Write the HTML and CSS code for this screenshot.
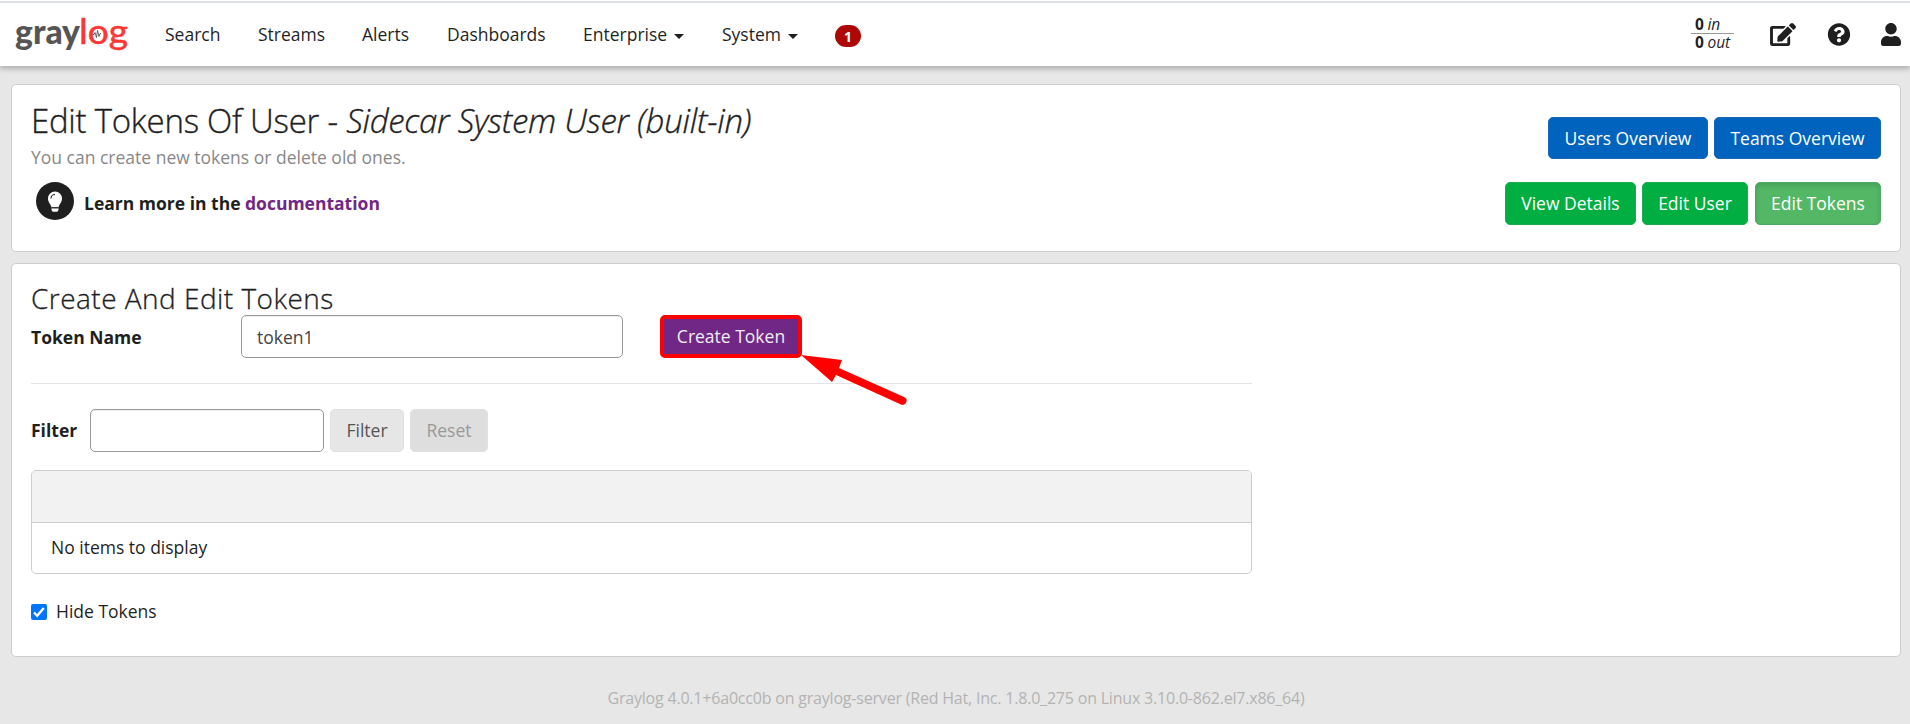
FILE: index.html
```html
<!DOCTYPE html>
<html lang="en">
<head>
<meta charset="utf-8">
<title>Graylog - Edit Tokens</title>
<link rel="stylesheet" href="styles.css">
</head>
<body>
<header class="navbar">
  <svg class="logo" width="116" height="50" viewBox="0 0 116 50">
    <text class="logo-text logo-gray" x="3" y="33.500" textLength="65" lengthAdjust="spacingAndGlyphs">gray</text>
    <text class="logo-text logo-log" x="67" y="33.500" textLength="49" lengthAdjust="spacingAndGlyphs">log</text>
    <path class="logo-wave" d="M80.500 24.500h1.500l1-2 1.500 5 1-7 1.500 6 1-3h1"/>
  </svg>
  <nav class="nav">
    <a class="nav-item search">Search</a>
    <a class="nav-item streams">Streams</a>
    <a class="nav-item alerts">Alerts</a>
    <a class="nav-item dashboards">Dashboards</a>
    <a class="nav-item enterprise">Enterprise<span class="caret"></span></a>
    <a class="nav-item system">System<span class="caret"></span></a>
    <span class="badge">1</span>
  </nav>
  <div class="throughput">
    <div class="rate rate-in"><b>0</b> <i>in</i></div>
    <div class="rate"><b>0</b> <i>out</i></div>
  </div>
  <svg class="icon-edit" width="26" height="23" viewBox="0 0 576 512"><path d="M402.6 83.2l90.200 90.200c3.800 3.800 3.800 10 0 13.800L274.400 405.600l-92.800 10.300c-12.400 1.400-22.900-9.100-21.500-21.500l10.300-92.800L388.800 83.200c3.800-3.800 10-3.800 13.800 0zm162-22.900l-48.800-48.800c-15.200-15.200-39.900-15.200-55.200 0l-35.400 35.400c-3.800 3.800-3.800 10 0 13.800l90.200 90.200c3.800 3.800 10 3.800 13.800 0l35.400-35.400c15.200-15.300 15.200-40 0-55.200zM384 346.200V448H64V128h229.800c3.200 0 6.200-1.300 8.500-3.500l40-40c7.600-7.600 2.200-20.500-8.500-20.500H48C21.500 64 0 85.500 0 112v352c0 26.500 21.500 48 48 48h352c26.500 0 48-21.500 48-48V306.200c0-10.700-12.900-16-20.500-8.500l-40 40c-2.200 2.300-3.500 5.300-3.500 8.500z"/></svg>
  <svg class="icon-help" width="24" height="23" viewBox="0 0 512 512"><path d="M504 256c0 136.997-111.043 248-248 248S8 392.997 8 256C8 119.083 119.043 8 256 8s248 111.083 248 248zM262.655 90c-54.497 0-89.255 22.957-116.549 63.758-3.536 5.286-2.353 12.415 2.715 16.258l34.699 26.310c5.205 3.947 12.621 3.008 16.665-2.122 17.864-22.658 30.113-35.797 57.303-35.797 20.429 0 45.698 13.148 45.698 32.958 0 14.976-12.363 22.667-32.534 33.976C247.128 238.528 216 254.941 216 296v4c0 6.627 5.373 12 12 12h56c6.627 0 12-5.373 12-12v-1.333c0-28.462 83.186-29.647 83.186-106.667 0-58.002-60.165-102-116.531-102zM256 338c-25.365 0-46 20.635-46 46 0 25.364 20.635 46 46 46s46-20.636 46-46c0-25.365-20.635-46-46-46z"/></svg>
  <svg class="icon-user" width="20" height="23" viewBox="0 0 448 512"><path d="M224 256c70.700 0 128-57.300 128-128S294.700 0 224 0 96 57.300 96 128s57.300 128 128 128zm89.600 32h-16.700c-22.200 10.200-46.900 16-72.900 16s-50.600-5.800-72.900-16h-16.700C60.200 288 0 348.200 0 422.400V464c0 26.500 21.500 48 48 48h352c26.500 0 48-21.500 48-48v-41.600c0-74.200-60.200-134.400-134.400-134.400z"/></svg>
</header>

<main class="page">
  <section class="card header-card">
    <div class="intro">
      <h1 class="title">Edit Tokens Of User - <em>Sidecar System User (built-in)</em></h1>
      <p class="lead">You can create new tokens or delete old ones.</p>
      <div class="learn">
        <svg width="38" height="38" viewBox="0 0 38 38"><circle cx="19" cy="19" r="19" fill="#1f1f1f"/><path d="M19 9.500a7 7 0 0 0-7 7c0 4 2.800 5.400 3.500 9h7c.7-3.600 3.500-5 3.500-9a7 7 0 0 0-7-7zM15.500 26.300h7v1.700l-1.200 1.700h-4.600L15.500 28z" fill="#fff"/><path d="M15 16.500a4 4 0 0 1 4-4M15.500 25.800h7" fill="none" stroke="#1f1f1f" stroke-width="1.100"/></svg>
        <strong>Learn more in the <a class="doc">documentation</a></strong>
      </div>
    </div>
    <div class="actions">
      <div class="button-row">
        <button class="btn blue users">Users Overview</button>
        <button class="btn blue teams">Teams Overview</button>
      </div>
      <div class="button-row">
        <button class="btn green view">View Details</button>
        <button class="btn green edit-user">Edit User</button>
        <button class="btn green active edit-tokens">Edit Tokens</button>
      </div>
    </div>
  </section>

  <section class="card token-card">
    <h2 class="subtitle">Create And Edit Tokens</h2>
    <div class="token-form">
      <label class="label name-label" for="token-name">Token Name</label>
      <input class="input name-input" id="token-name" value="token1">
      <div class="create-wrap">
        <button class="btn create">Create Token</button>
        <svg class="arrow" width="110" height="56" viewBox="0 0 110 56"><path d="M0 0 41 5 38 13 103 42A4 4 0 0 1 100 49.500L35 20 31 27Z" fill="#f00"/></svg>
      </div>
    </div>
    <hr class="rule">
    <div class="filter-form">
      <label class="label filter-label" for="filter">Filter</label>
      <input class="input filter-input" id="filter">
      <button class="btn gray filter-btn">Filter</button>
      <button class="btn gray reset-btn">Reset</button>
    </div>
    <div class="list">
      <div class="list-head"></div>
      <div class="list-row">No items to display</div>
    </div>
    <label class="hide">
      <svg width="16" height="16" viewBox="0 0 16 16"><rect width="16" height="16" rx="2" fill="#0075ff"/><path d="M3 8.500 6.200 11.700 12.800 4" fill="none" stroke="#fff" stroke-width="2.300"/></svg>
      <span>Hide Tokens</span>
    </label>
  </section>
  <footer class="footer"><span>Graylog 4.0.1+6a0cc0b on graylog-server (Red Hat, Inc. 1.8.0_275 on Linux 3.10.0-862.el7.x86_64)</span></footer>
</main>
</body>
</html>
```

FILE: styles.css
```css
* { box-sizing: border-box; }
body {
  margin: 0;
  height: 724px;
  overflow: hidden;
  background: #e7e7e7;
  color: #1f1f1f;
  font: 400 17.5px/25px "Open Sans", sans-serif;
}
.navbar {
  position: relative;
  display: flex;
  height: 66px;
  padding-left: 12px;
  background: #fff;
  border-top: 1px solid #fff;
  box-shadow: inset 0 2px #dcdfe5, 0 3px 5px rgba(0, 0, 0, .24);
}
.logo { margin-top: 9px; flex: none; overflow: visible; }
.logo-text { font-family: Lato, sans-serif; font-size: 35px; }
.logo-gray { fill: #555; font-weight: 900; }
.logo-log { fill: #ff3633; font-weight: 400; stroke: #ff3633; stroke-width: .5; }
.logo-wave { fill: none; stroke: #444; stroke-width: .8; }
.nav { display: flex; padding-top: 21px; margin-left: 37px; }
.nav-item { flex: none; white-space: nowrap; }
.search { width: 93px; }
.streams { width: 104px; }
.alerts { width: 85px; }
.dashboards { width: 136px; }
.enterprise { width: 139px; }
.system { width: 113px; }
.caret {
  display: inline-block;
  margin-left: 7px;
  vertical-align: 2px;
  border: 5px solid transparent;
  border-top-color: #1f1f1f;
  border-bottom: 0;
}
.badge {
  width: 26px;
  height: 22px;
  margin-top: 3px;
  border-radius: 11px;
  background: #ad0707;
  color: #fff;
  font-size: 14px;
  font-weight: 700;
  line-height: 23px;
  text-align: center;
}
.throughput { margin: 14px 36px 0 auto; width: 43px; font-size: 15.5px; line-height: 18px; }
.rate { height: 18px; padding-left: 4px; white-space: nowrap; word-spacing: -.5px; line-height: 17px; }
.rate-in { height: 19px; line-height: 19px; border-bottom: 1px solid #999; }
.navbar > svg:not(.logo) { margin-top: 22px; flex: none; fill: #1f1f1f; }
.icon-help { margin: 0 30px 0 31px; }
.icon-user { margin-right: 9px; }
.page { padding: 18px 9px 0 11px; }
.card { background: #fff; border: 1px solid #cdcdcd; border-radius: 5px; padding: 0 19px; }
.header-card { display: flex; justify-content: space-between; height: 168px; }
.intro { padding-top: 13px; }
.title { margin: 0 0 1px; font-size: 33px; font-weight: 300; letter-spacing: -.25px; line-height: 46px; white-space: nowrap; -webkit-text-stroke: .35px #1f1f1f; }
.lead { margin: 0; color: #888; }
.learn { display: flex; align-items: center; gap: 10px; margin: 12px 0 0 5px; }
.learn strong { font-weight: 700; margin-top: 4px; }
.doc { color: #702785; }
.actions { display: flex; flex-direction: column; align-items: flex-end; padding-top: 32px; gap: 23px; }
.button-row { display: flex; gap: 6px; }
.btn {
  height: 43px;
  padding: 0;
  border: 1px solid transparent;
  border-radius: 5px;
  font: inherit;
  white-space: nowrap;
}
.blue { height: 42px; background: #0063be; border-color: #1766b8; color: #fff; }
.green { background: #00ae42; border-color: #19aa4e; color: #fff; }
.green.active { background: #53b766; border-color: #4eaa60; box-shadow: inset 0 3px 5px rgba(0, 0, 0, .125); }
.users { width: 160px; }
.teams { width: 167px; }
.view { width: 131px; }
.edit-user { width: 106px; }
.edit-tokens { width: 126px; margin-left: 1px; }
.token-card { height: 394px; margin-top: 11px; padding-top: 19px; }
.subtitle { margin: 0; height: 32px; font-size: 28px; font-weight: 300; letter-spacing: .47px; line-height: 30px; -webkit-text-stroke: .3px #1f1f1f; }
.token-form { display: flex; align-items: center; height: 43px; }
.label { font-weight: 700; }
.name-label { width: 210px; padding-top: 1px; }
.input {
  height: 43px;
  padding: 0 15px;
  border: 1px solid #999;
  border-radius: 5px;
  background: #fff;
  box-shadow: inset 0 1px 1px rgba(0, 0, 0, .075);
  color: #444;
  font: inherit;
}
.name-input { width: 382px; }
.create-wrap { position: relative; margin-left: 37px; height: 43px; }
.create { width: 142px; border: 4px solid #f00; background: #702785; color: #eee; line-height: 30px; padding-bottom: 2px; }
.arrow { position: absolute; left: 141px; top: 40px; }
.rule { width: 1221px; margin: 25px 0; border: 0; height: 1px; background: #e3e3e3; }
.filter-form { display: flex; align-items: center; }
.filter-label { width: 59px; }
.filter-input { width: 234px; }
.gray { background: #e6e6e6; border-color: #e0e0e0; color: #555; }
.filter-btn { width: 74px; margin: 0 6px; }
.reset-btn { width: 78px; background: #dedede; color: #999; }
.list { width: 1221px; height: 104px; margin-top: 18px; border: 1px solid #cdcdcd; border-radius: 5px; overflow: hidden; }
.list-head { height: 52px; background: #f2f2f2; border-bottom: 1px solid #cdcdcd; }
.list-row { padding: 12px 19px; }
.hide { display: flex; align-items: center; gap: 9px; height: 26px; margin-top: 25px; }
.hide span { margin-top: -2px; }
.footer { padding-top: 29px; text-align: center; font-size: 16px; letter-spacing: -.2px; line-height: 24px; color: #b3b3b3; }
```
